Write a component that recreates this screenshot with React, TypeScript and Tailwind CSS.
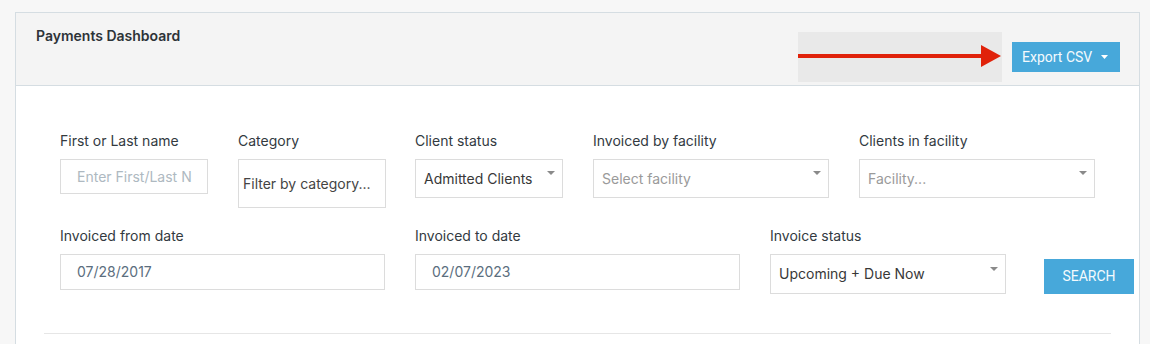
import React from "react";

const Caret = ({ color = "#8a8a8a", w = 8, h = 4 }: { color?: string; w?: number; h?: number }) => (
  <svg width={w} height={h} viewBox={`0 0 ${w} ${h}`} className="shrink-0">
    <polygon points={`0,0 ${w},0 ${w / 2},${h}`} fill={color} />
  </svg>
);

const Label = ({ children }: { children: React.ReactNode }) => (
  <div className="text-[14px] leading-[20px] text-[#333a3f] mb-[8px] whitespace-nowrap">{children}</div>
);

const Select = ({
  value,
  placeholder,
  w,
  h,
  caretTop,
}: {
  value: string;
  placeholder?: boolean;
  w: string;
  h: string;
  caretTop: string;
}) => (
  <div className={`${w} ${h} border border-[#dcdcdc] bg-white flex justify-between pl-[8px] pr-[7px]`}>
    <span
      className={`self-center text-[14px] leading-[20px] whitespace-nowrap ${
        placeholder ? "text-[#9a9a9a]" : "text-[#383838]"
      }`}
    >
      {value}
    </span>
    <div className={caretTop}>
      <Caret />
    </div>
  </div>
);

export default function App() {
  return (
    <div
      className="min-h-[344px] bg-[#f7f7f7] pt-[12px] pl-[15px] overflow-hidden"
      style={{ fontFamily: "Inter, 'Noto Sans', sans-serif" }}
    >
      <div className="w-[1125px] min-h-[340px] border border-[#d5dde2] bg-white">
        {/* Header */}
        <div className="h-[73px] bg-[#f4f4f4] border-b border-[#d5dde2] flex justify-between pl-[20px] pr-[19px]">
          <h1 className="pt-[13px] text-[14px] leading-[20px] font-semibold text-[#2d3338]">Payments Dashboard</h1>
          <div className="flex items-center gap-[10px] mt-[19px] self-start">
            <div className="w-[204px] h-[50px] bg-[#e9e9e9]">
              <svg width="204" height="50" viewBox="0 0 204 50">
                <rect x="0" y="22" width="186" height="4" fill="#e0220a" />
                <polygon points="183,13 203,24 183,35" fill="#e0220a" />
              </svg>
            </div>
            <button
              className="w-[108px] h-[30px] bg-[#47a8da] text-[#f4fafd] text-[14px] flex items-center pl-[10px] gap-[9px]"
              style={{ fontFamily: "Roboto, 'Liberation Sans', sans-serif" }}
            >
              <span>Export CSV</span>
              <Caret color="#ffffff" w={7} h={4} />
            </button>
          </div>
        </div>

        {/* Body */}
        <div className="px-[28px] pt-[45px]">
          <div className="pl-[16px]">
            {/* Row 1 */}
            <div className="flex items-start">
              <div className="w-[178px] shrink-0">
                <Label>First or Last name</Label>
                <div className="w-[148px] h-[35px] border border-[#dcdcdc] bg-white flex items-center pl-[16px] overflow-hidden">
                  <span className="text-[14px] leading-[20px] text-[#aeb9c1] whitespace-nowrap">Enter First/Last N</span>
                </div>
              </div>
              <div className="w-[177px] shrink-0">
                <Label>Category</Label>
                <div className="w-[148px] h-[49px] border border-[#dcdcdc] bg-white flex items-center pl-[4px]">
                  <span className="text-[14px] leading-[20px] text-[#444] whitespace-nowrap">Filter by category...</span>
                </div>
              </div>
              <div className="w-[178px] shrink-0">
                <Label>Client status</Label>
                <Select value="Admitted Clients" w="w-[148px]" h="h-[39px]" caretTop="mt-[11px]" />
              </div>
              <div className="w-[266px] shrink-0">
                <Label>Invoiced by facility</Label>
                <Select value="Select facility" placeholder w="w-[236px]" h="h-[39px]" caretTop="mt-[11px]" />
              </div>
              <div className="shrink-0">
                <Label>Clients in facility</Label>
                <Select value="Facility..." placeholder w="w-[236px]" h="h-[39px]" caretTop="mt-[11px]" />
              </div>
            </div>

            {/* Row 2 */}
            <div className="flex items-start mt-[18px]">
              <div className="w-[355px] shrink-0">
                <Label>Invoiced from date</Label>
                <div className="w-[325px] h-[36px] border border-[#dcdcdc] bg-white flex items-center pl-[16px]">
                  <span className="text-[14px] leading-[20px] text-[#5b6e7e]">07/28/2017</span>
                </div>
              </div>
              <div className="w-[355px] shrink-0">
                <Label>Invoiced to date</Label>
                <div className="w-[325px] h-[36px] border border-[#dcdcdc] bg-white flex items-center pl-[16px]">
                  <span className="text-[14px] leading-[20px] text-[#5b6e7e]">02/07/2023</span>
                </div>
              </div>
              <div className="w-[274px] shrink-0">
                <Label>Invoice status</Label>
                <Select value="Upcoming + Due Now" w="w-[236px]" h="h-[40px]" caretTop="mt-[12px]" />
              </div>
              <div className="pt-[33px] shrink-0">
                <button
                  className="w-[90px] h-[35px] bg-[#47a8da] text-[#f4fafd] text-[14px] flex items-center justify-center"
                  style={{ fontFamily: "Roboto, 'Liberation Sans', sans-serif" }}
                >
                  SEARCH
                </button>
              </div>
            </div>
          </div>
          <div className="mt-[39px] h-px bg-[#e6e6e6]" />
        </div>
      </div>
    </div>
  );
}
